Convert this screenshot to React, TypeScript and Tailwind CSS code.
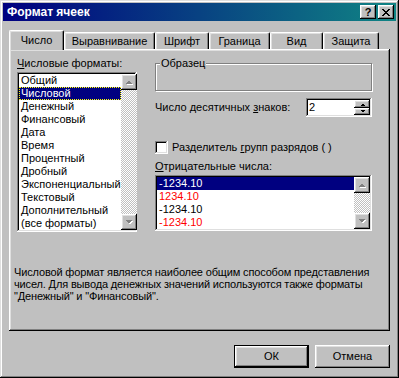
import React from 'react';

// classic 3D bevels
const raised = 'shadow-[inset_-1px_-1px_#000,inset_1px_1px_#fff,inset_-2px_-2px_#808080,inset_2px_2px_#dfdfdf]';
const sunken = 'shadow-[inset_-1px_-1px_#fff,inset_1px_1px_#808080,inset_-2px_-2px_#dfdfdf,inset_2px_2px_#000]';
const windowEdge = 'shadow-[inset_-1px_-1px_#000,inset_1px_1px_#dfdfdf,inset_-2px_-2px_#808080,inset_2px_2px_#fff]';

const formats = [
  'Общий',
  'Числовой',
  'Денежный',
  'Финансовый',
  'Дата',
  'Время',
  'Процентный',
  'Дробный',
  'Экспоненциальный',
  'Текстовый',
  'Дополнительный',
  '(все форматы)',
];

const negatives = [
  { text: '-1234.10', red: false },
  { text: '1234.10', red: true },
  { text: '-1234.10', red: false },
  { text: '-1234.10', red: true },
];

const tabs = [
  { label: 'Выравнивание', w: 'w-[91px]' },
  { label: 'Шрифт', w: 'w-[54px]' },
  { label: 'Граница', w: 'w-[61px]' },
  { label: 'Вид', w: 'w-[53px]' },
  { label: 'Защита', w: 'w-[56px]' },
];

function Arrow({ dir, disabled }: { dir: 'up' | 'down'; disabled?: boolean }) {
  const pts = dir === 'up' ? '0,4 7,4 3.5,0.5' : '0,0 7,0 3.5,3.5';
  return (
    <svg width="8" height="5" viewBox="0 0 8 5" shapeRendering="crispEdges">
      {disabled && <polygon points={pts} fill="#fff" transform="translate(1,1)" />}
      <polygon points={pts} fill={disabled ? '#808080' : '#000'} />
    </svg>
  );
}

function ScrollBtn({ dir }: { dir: 'up' | 'down' }) {
  return (
    <div className={`w-[16px] h-[16px] shrink-0 bg-[#c0c0c0] flex items-center justify-center ${raised}`}>
      <Arrow dir={dir} disabled />
    </div>
  );
}

function VScroll() {
  return (
    <div className="flex flex-col w-[16px] shrink-0">
      <ScrollBtn dir="up" />
      <div className="flex-1 bg-[repeating-conic-gradient(#ffffff_0_25%,#c0c0c0_0_50%)] bg-[length:2px_2px]" />
      <ScrollBtn dir="down" />
    </div>
  );
}

export default function App() {
  return (
    <div
      className={`w-[399px] h-[378px] bg-[#c0c0c0] p-[3px] flex flex-col text-black text-[11px] leading-[13px] font-['Liberation_Sans',Arial,sans-serif] ${windowEdge}`}
    >
      {/* Title bar */}
      <div className="h-[18px] shrink-0 flex items-center pl-[4px] pr-[2px] bg-[linear-gradient(to_right,#000080,#108484)]">
        <span className="flex-1 text-white font-bold text-[12px] leading-[18px]">Формат ячеек</span>
        <div className={`w-[16px] h-[14px] bg-[#c0c0c0] flex items-center justify-center text-[11px] font-bold leading-none ${raised}`}>
          ?
        </div>
        <div className={`ml-[2px] w-[16px] h-[14px] bg-[#c0c0c0] flex items-center justify-center ${raised}`}>
          <svg width="8" height="7" viewBox="0 0 8 7" shapeRendering="crispEdges">
            <path d="M0 0h2v1h1v1h2v-1h1v-1h2v1h-1v1h-1v1h-1v1h1v1h1v1h1v1h-2v-1h-1v-1h-2v1h-1v1h-2v-1h1v-1h1v-1h1v-1h-1v-1h-1v-1h-1z" fill="#000" />
          </svg>
        </div>
      </div>

      <div className="px-[6px] flex flex-col">
        {/* Tabs */}
        <div className="mt-[9px] h-[19px] flex items-end">
          <div className="relative z-10 -mb-[1px] w-[55px] h-[20px] bg-[#c0c0c0] border-l border-t border-white border-r border-r-black rounded-t-[2px] shadow-[inset_-1px_0_#808080,inset_1px_1px_#dfdfdf] flex items-center justify-center pb-[1px]">
            Число
          </div>
          {tabs.map((t) => (
            <div
              key={t.label}
              className={`${t.w} h-[17px] bg-[#c0c0c0] border-l border-t border-white border-r border-r-black rounded-t-[2px] shadow-[inset_-1px_0_#808080,inset_1px_1px_#dfdfdf] flex items-center justify-center`}
            >
              {t.label}
            </div>
          ))}
        </div>

        {/* Panel */}
        <div className={`h-[282px] bg-[#c0c0c0] px-[5px] pt-[8px] flex flex-col ${raised}`}>
          <div className="ml-[3px] flex gap-[18px]">
            {/* Left column */}
            <div className="w-[120px] flex flex-col">
              <div>
                <span className="underline">Ч</span>исловые форматы:
              </div>
              <div className={`mt-[2px] h-[160px] bg-white p-[2px] flex ${sunken}`}>
                <div className="flex-1 flex flex-col">
                  {formats.map((f) => (
                    <div
                      key={f}
                      className={
                        f === 'Числовой'
                          ? 'h-[13px] pl-[2px] bg-[#000080] text-white outline-1 outline-dotted outline-[#ffff00] -outline-offset-1'
                          : 'h-[13px] pl-[2px] whitespace-nowrap'
                      }
                    >
                      {f}
                    </div>
                  ))}
                </div>
                <VScroll />
              </div>
            </div>

            {/* Right column */}
            <div className="w-[217px] flex flex-col">
              <div className="relative mt-[6px] h-[28px] border border-[#808080] shadow-[inset_1px_1px_#fff,1px_1px_#fff]">
                <span className="absolute left-[4px] -top-[7px] px-[1px] bg-[#c0c0c0]">Образец</span>
              </div>

              <div className="mt-[7px] flex items-center justify-between">
                <span>
                  Число десятичных <span className="underline">з</span>наков:
                </span>
                <div className={`w-[66px] h-[19px] bg-white p-[2px] flex ${sunken}`}>
                  <span className="flex-1 pl-[1px] leading-[15px]">2</span>
                  <div className="flex flex-col w-[16px]">
                    <div className={`h-[8px] bg-[#c0c0c0] flex items-center justify-center ${raised}`}>
                      <svg width="5" height="3" viewBox="0 0 5 3" shapeRendering="crispEdges">
                        <polygon points="0,3 5,3 2.5,0.5" fill="#000" />
                      </svg>
                    </div>
                    <div className={`h-[7px] bg-[#c0c0c0] flex items-center justify-center ${raised}`}>
                      <svg width="5" height="3" viewBox="0 0 5 3" shapeRendering="crispEdges">
                        <polygon points="0,0 5,0 2.5,2.5" fill="#000" />
                      </svg>
                    </div>
                  </div>
                </div>
              </div>

              <div className="mt-[24px] flex items-center gap-[4px]">
                <div className={`w-[13px] h-[13px] bg-white ${sunken}`} />
                <span>
                  Разделитель <span className="underline">г</span>рупп разрядов ( )
                </span>
              </div>

              <div className="mt-[6px]">
                <span className="underline">О</span>трицательные числа:
              </div>
              <div className={`mt-[2px] h-[56px] bg-white p-[2px] flex ${sunken}`}>
                <div className="flex-1 flex flex-col">
                  {negatives.map((n, i) => (
                    <div
                      key={i}
                      className={
                        i === 0
                          ? 'h-[13px] pl-[2px] bg-[#000080] text-white'
                          : n.red
                            ? 'h-[13px] pl-[2px] text-[#ff0000]'
                            : 'h-[13px] pl-[2px]'
                      }
                    >
                      {n.text}
                    </div>
                  ))}
                </div>
                <VScroll />
              </div>
            </div>
          </div>

          {/* Description */}
          <p className="mt-[34px] leading-[12px] tracking-[-0.15px] whitespace-nowrap">
            Числовой формат является наиболее общим способом представления
            <br />
            чисел. Для вывода денежных значений используются также форматы
            <br />
            "Денежный" и "Финансовый".
          </p>
        </div>

        {/* Buttons */}
        <div className="mt-[14px] flex justify-end gap-[6px]">
          <div className="w-[75px] h-[23px] border border-black">
            <div className={`w-full h-full flex items-center justify-center ${raised}`}>ОК</div>
          </div>
          <div className={`w-[75px] h-[23px] flex items-center justify-center ${raised}`}>Отмена</div>
        </div>
      </div>
    </div>
  );
}
